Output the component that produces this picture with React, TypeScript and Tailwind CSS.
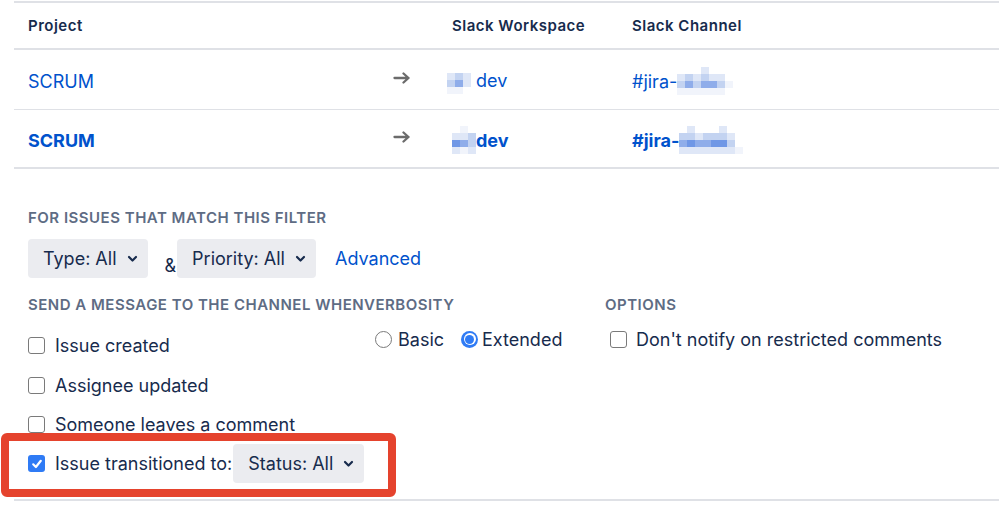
import React from "react";

const font = { fontFamily: "Inter, 'Noto Sans', sans-serif" };

function Mosaic({ rows }: { rows: string[][] }) {
  return (
    <span className="inline-flex flex-col align-middle">
      {rows.map((r, i) => (
        <span key={i} className="flex">
          {r.map((c, j) => (
            <span key={j} className={`block w-[8px] h-[7px] ${c}`} />
          ))}
        </span>
      ))}
    </span>
  );
}

function Chevron() {
  return (
    <svg width="11" height="8" viewBox="0 0 11 8" className="ml-[10px]">
      <path d="M2 2 L5.5 5.5 L9 2" fill="none" stroke="#172b4d" strokeWidth="2.2" strokeLinecap="round" strokeLinejoin="round" />
    </svg>
  );
}

function Select({ label }: { label: string }) {
  return (
    <div className="flex items-center h-[39px] pl-[15px] pr-[10px] bg-[#ebecf0] rounded-[4px] text-[18px] text-[#172b4d] whitespace-nowrap">
      <span>{label}</span>
      <Chevron />
    </div>
  );
}

function Checkbox({ checked }: { checked?: boolean }) {
  if (checked) {
    return (
      <span className="flex items-center justify-center w-[17px] h-[17px] rounded-[3px] bg-[#2f7bf5] shrink-0">
        <svg width="12" height="12" viewBox="0 0 12 12">
          <path d="M2.2 6.3 L4.9 9 L9.8 2.8" fill="none" stroke="white" strokeWidth="2.2" strokeLinecap="round" strokeLinejoin="round" />
        </svg>
      </span>
    );
  }
  return <span className="block w-[17px] h-[17px] rounded-[3px] border border-[#7a7a7a] bg-white shrink-0" />;
}

function Radio({ checked }: { checked?: boolean }) {
  if (checked) {
    return (
      <span className="flex items-center justify-center w-[17px] h-[17px] rounded-full bg-[#2f7bf5] shrink-0">
        <span className="flex items-center justify-center w-[12px] h-[12px] rounded-full bg-white">
          <span className="block w-[9px] h-[9px] rounded-full bg-[#2f7bf5]" />
        </span>
      </span>
    );
  }
  return <span className="block w-[17px] h-[17px] rounded-full border border-[#7a7a7a] bg-white shrink-0" />;
}

function Arrow() {
  return (
    <svg width="18" height="12" viewBox="0 0 18 12">
      <path d="M1.5 6 H15.5 M10.5 1.5 L15.5 6 L10.5 10.5" fill="none" stroke="#6b6b6b" strokeWidth="2.3" strokeLinecap="round" strokeLinejoin="round" />
    </svg>
  );
}

const L = "bg-[#dfe7f7]";
const M = "bg-[#c3d3f1]";
const D = "bg-[#8fadea]";
const E = "bg-[#f1f4fb]";
const W = "bg-transparent";
const DD = "bg-[#6f97e6]";

const label = "text-[15px] leading-[20px] font-semibold text-[#5e6c84] uppercase tracking-[0.5px] whitespace-nowrap";

export default function App() {
  return (
    <div className="w-[999px] h-[505px] bg-white relative overflow-hidden" style={font}>
      <div className="ml-[14px] mt-px border-t-2 border-[#dfe1e6]">
        {/* header */}
        <div className="grid grid-cols-[364px_60px_180px_1fr] h-[47px] pt-[2px] items-center border-b-2 border-[#dfe1e6] text-[15px] tracking-[0.5px] font-semibold text-[#172b4d]">
          <div className="pl-[14px]">Project</div>
          <div />
          <div className="pl-[14px]">Slack Workspace</div>
          <div className="pl-[14px]">Slack Channel</div>
        </div>
        {/* row 1 */}
        <div className="grid grid-cols-[364px_60px_180px_1fr] h-[60px] pt-[3px] items-center border-b border-[#dfe1e6] text-[18px] text-[#0052cc]">
          <div className="pl-[14px]">SCRUM</div>
          <div className="pl-[15px] flex items-center -mt-[6px]"><Arrow /></div>
          <div className="pl-[9px] flex items-center -mt-[2px]">
            <Mosaic rows={[[W, W, W, W], [L, M, L, W], [M, D, L, W], [E, E, W, W]]} />
            <span className="-ml-[3px]">dev</span>
          </div>
          <div className="pl-[14px] flex items-center">
            <span>#jira-</span>
            <Mosaic rows={[[W, W, W, L, W, W, W, W], [L, M, L, M, L, L, W, W], [M, D, M, D, D, M, E, W], [E, E, E, E, E, E, W, W]]} />
          </div>
        </div>
        {/* row 2 */}
        <div className="grid grid-cols-[364px_60px_180px_1fr] h-[59px] pt-[3px] items-center border-b-2 border-[#dfe1e6] text-[18px] font-bold text-[#0052cc]">
          <div className="pl-[14px]">SCRUM</div>
          <div className="pl-[15px] flex items-center -mt-[6px]"><Arrow /></div>
          <div className="pl-[14px] flex items-center">
            <Mosaic rows={[[W, E, W], [L, L, M], [DD, D, M], [L, E, L]]} />
            <span>dev</span>
          </div>
          <div className="pl-[14px] flex items-center">
            <span>#jira-</span>
            <Mosaic rows={[[W, L, W, W, W, L, W, W], [M, M, L, M, M, M, L, W], [D, DD, D, D, DD, DD, M, W], [L, L, L, L, L, L, L, E]]} />
          </div>
        </div>

        {/* form */}
        <div className="pl-[14px] pt-[39px] text-[#172b4d]">
          <div className={label}>For issues that match this filter</div>
          <div className="flex items-center mt-[10px]">
            <Select label="Type: All" />
            <span className="ml-[17px] mr-[1px] mt-[14px] text-[18px]">&amp;</span>
            <Select label="Priority: All" />
            <span className="ml-[19px] text-[18px] text-[#0052cc]">Advanced</span>
          </div>

          <div className="flex mt-[16px]">
            <div className="w-[336px] shrink-0">
              <div className={label}>Send a message to the channel when</div>
              <div className="mt-[10px] text-[18px]">
                <div className="flex items-center h-[40px] gap-[10px]"><Checkbox /><span>Issue created</span></div>
                <div className="flex items-center h-[40px] gap-[10px]"><Checkbox /><span>Assignee updated</span></div>
                <div className="flex items-center h-[39px] gap-[10px]"><Checkbox /><span>Someone leaves a comment</span></div>
                <div className="flex items-center h-[39px] gap-[10px] whitespace-nowrap">
                  <Checkbox checked />
                  <span>Issue transitioned to:</span>
                  <div className="-ml-[9px]"><Select label="Status: All" /></div>
                </div>
              </div>
            </div>
            <div className="w-[241px] shrink-0">
              <div className={label}>Verbosity</div>
              <div className="mt-[4px] flex items-center h-[40px] pl-[11px] text-[18px]">
                <Radio />
                <span className="ml-[6px]">Basic</span>
                <span className="ml-[17px]"><Radio checked /></span>
                <span className="ml-[4px]">Extended</span>
              </div>
            </div>
            <div className="flex-1">
              <div className={label}>Options</div>
              <div className="mt-[4px] flex items-center h-[40px] pl-[5px] gap-[9px] text-[18px]">
                <Checkbox />
                <span>Don't notify on restricted comments</span>
              </div>
            </div>
          </div>
        </div>
        <div className="mt-[16px] border-t-2 border-[#dfe1e6]" />
      </div>

      {/* annotation */}
      <div className="absolute left-[1px] top-[433px] w-[395px] h-[64px] border-[8px] border-[#e5432d] rounded-[6px]" />
    </div>
  );
}
